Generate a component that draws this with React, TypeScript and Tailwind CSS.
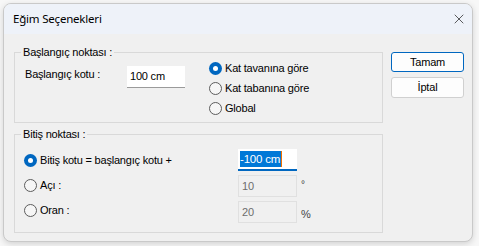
import { X } from 'lucide-react'

const font = 'font-["Liberation_Sans",Arial,sans-serif]'

function Radio({ checked, label }: { checked?: boolean; label: string }) {
  return (
    <div className="flex items-center gap-[3px] h-[20px]">
      {checked ? (
        <span className="w-[13px] h-[13px] rounded-full bg-[#0067c0] flex items-center justify-center">
          <span className="w-[5px] h-[5px] rounded-full bg-white" />
        </span>
      ) : (
        <span className="w-[13px] h-[13px] rounded-full border border-[#5c5c5c] bg-[#f6f6f6]" />
      )}
      <span className="text-[11px] tracking-[-0.2px] text-black leading-none">{label}</span>
    </div>
  )
}

function Group({ title, className, children }: { title: string; className: string; children: React.ReactNode }) {
  return (
    <div className={`relative border border-[#d9d9d9] ${className}`}>
      <span className="absolute -top-[8px] left-[6px] px-[2px] bg-[#f0f0f0] text-[11px] tracking-[-0.2px] leading-[14px] text-black">
        {title}
      </span>
      {children}
    </div>
  )
}

export default function App() {
  return (
    <div className={`w-[479px] h-[246px] bg-[#f7f7f7] pt-[3px] pl-[3px] ${font}`}>
      <div className="w-[470px] h-[239px] rounded-[8px] border border-[#c9c9c9] bg-[#f0f0f0] overflow-hidden shadow-[0_2px_6px_rgba(0,0,0,0.15)] flex flex-col">
        <div className="h-[30px] bg-[#eef2f9] flex items-center justify-between pl-[9px] pr-[5px] shrink-0">
          <span className="text-[11.5px] tracking-[-0.2px] text-black font-['Noto_Sans',sans-serif]">Eğim Seçenekleri</span>
          <X className="w-[16px] h-[16px] text-[#222]" strokeWidth={1.1} />
        </div>
        <div className="flex pl-[10px] pt-[18px] gap-[8px]">
          <div className="flex flex-col">
            <Group title="Başlangıç noktası :" className="w-[369px] h-[71px]">
              <div className="flex pl-[10px] pt-[3px]">
                <div className="flex items-center h-[36px] w-[102px] text-[11px] tracking-[-0.2px]">Başlangıç kotu :</div>
                <div className="mt-[10px] w-[58px] h-[22px] bg-white border-b border-[#9a9a9a] text-[11px] tracking-[-0.2px] pl-[3px] pt-[5px] leading-none">
                  100 cm
                </div>
                <div className="flex flex-col pl-[24px] pt-[2px]">
                  <Radio checked label="Kat tavanına göre" />
                  <Radio label="Kat tabanına göre" />
                  <Radio label="Global" />
                </div>
              </div>
            </Group>
            <Group title="Bitiş noktası :" className="w-[369px] h-[99px] mt-[11px]">
              <div className="flex pl-[9px] pt-[14px]">
                <div className="flex flex-col w-[214px] gap-[5px] pt-[1px]">
                  <Radio checked label="Bitiş kotu = başlangıç kotu +" />
                  <Radio label="Açı :" />
                  <Radio label="Oran :" />
                </div>
                <div className="flex flex-col gap-[4px]">
                  <div className="w-[59px] h-[22px] bg-white border-b-2 border-[#0067c0] flex items-center pl-[2px]">
                    <span className="bg-[#0078d7] text-white text-[11.5px] tracking-[-0.2px] leading-[16px] pr-[1px] border-r border-[#f07000]">-100 cm</span>
                  </div>
                  <div className="flex items-start gap-[4px]">
                    <div className="w-[59px] h-[22px] border border-[#e0e0e0] text-[#6d6d6d] text-[11px] pl-[3px] pt-[5px] leading-none">10</div>
                    <span className="text-[10px] text-[#444] leading-none pt-[5px]">°</span>
                  </div>
                  <div className="flex items-start gap-[4px]">
                    <div className="w-[59px] h-[22px] border border-[#e0e0e0] text-[#6d6d6d] text-[11px] pl-[3px] pt-[5px] leading-none">20</div>
                    <span className="text-[11px] text-[#444] leading-none pt-[8px]">%</span>
                  </div>
                </div>
              </div>
            </Group>
          </div>
          <div className="flex flex-col gap-[5px]">
            <button className="w-[73px] h-[20px] rounded-[3px] border border-[#0067c0] bg-[#fdfdfd] text-[11px] tracking-[-0.2px] leading-none text-black">
              Tamam
            </button>
            <button className="w-[73px] h-[21px] rounded-[3px] border border-[#d0d0d0] bg-[#fdfdfd] text-[11px] tracking-[-0.2px] leading-none text-black">
              İptal
            </button>
          </div>
        </div>
      </div>
    </div>
  )
}
